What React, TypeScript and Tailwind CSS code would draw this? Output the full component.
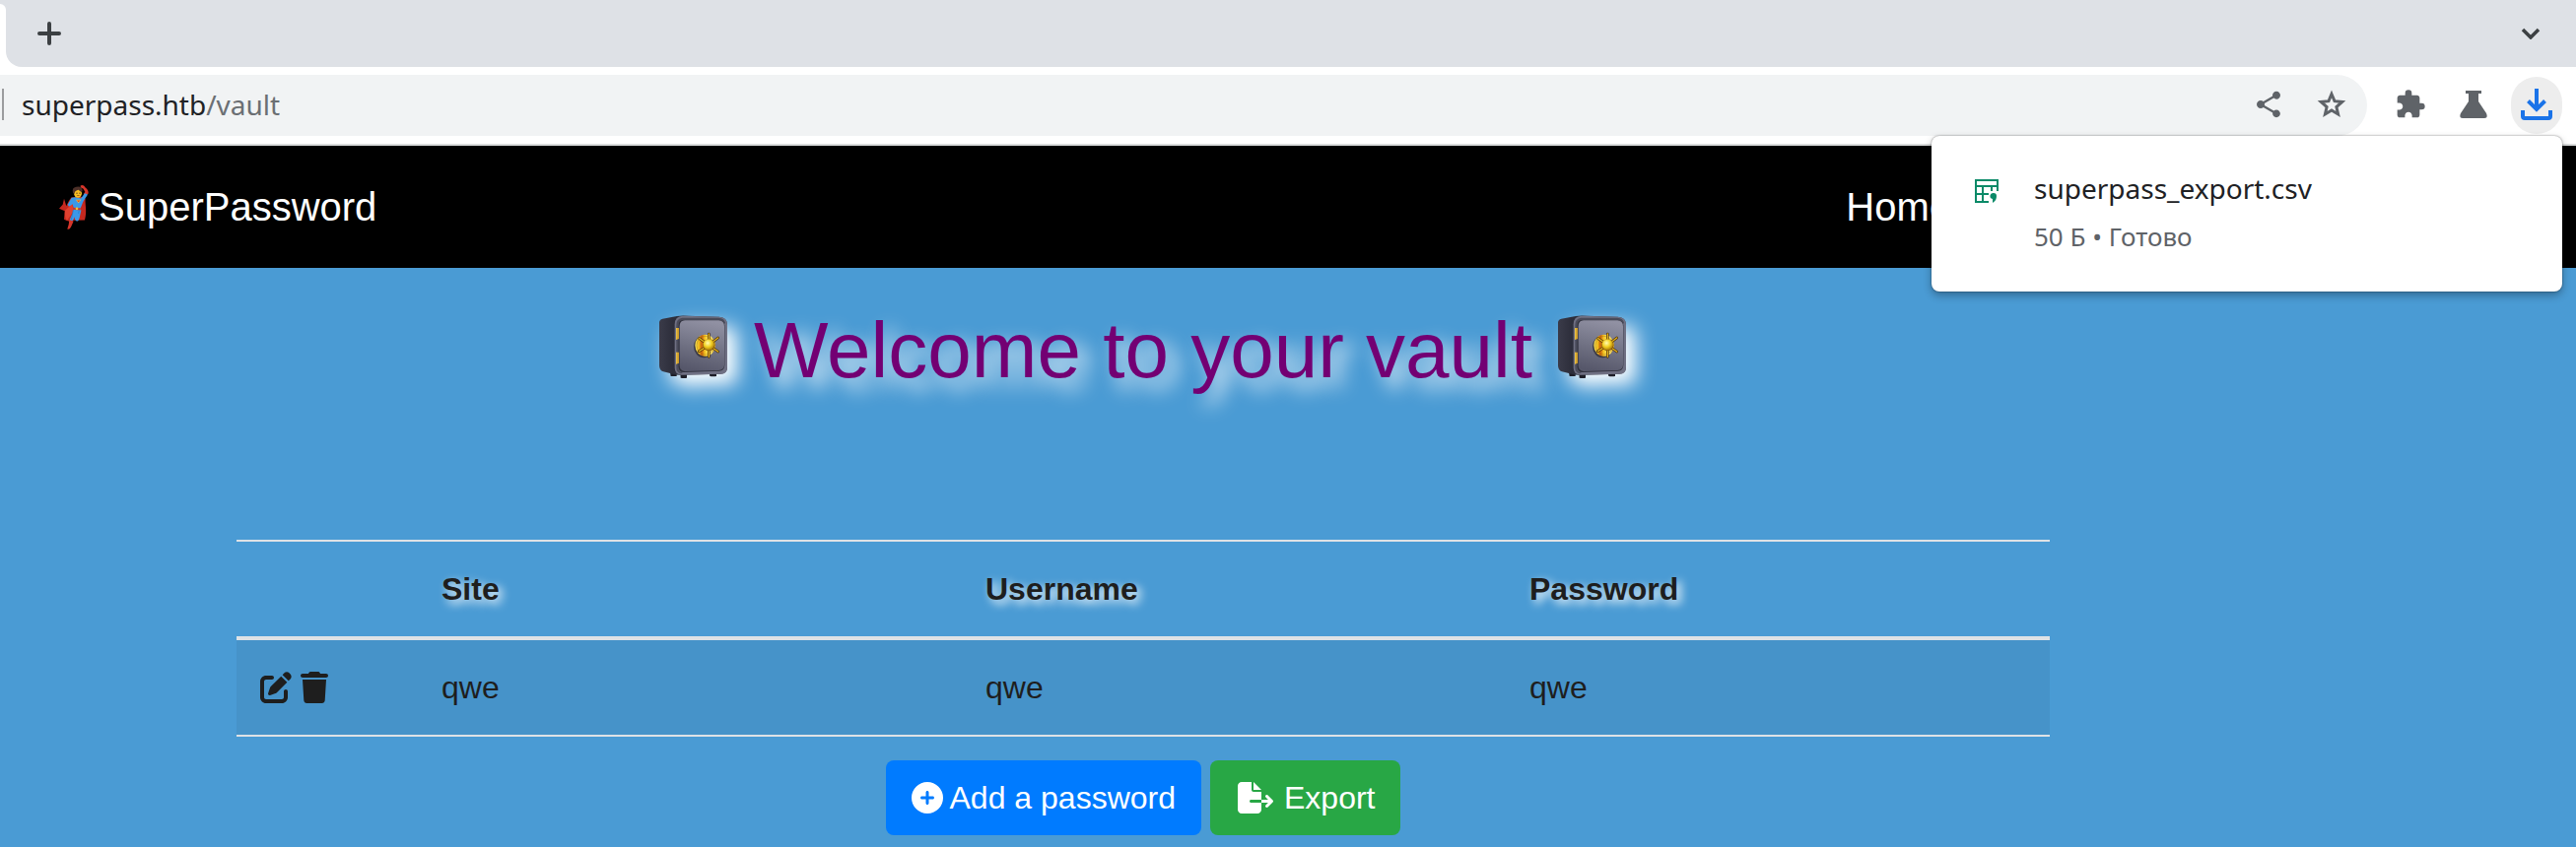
import { FaCirclePlus, FaFileExport, FaPenToSquare, FaTrash } from "react-icons/fa6";
import { MdExtension, MdShare } from "react-icons/md";

interface Entry {
  id: number;
  site: string;
  username: string;
  password: string;
}

const ENTRIES: Entry[] = [{ id: 1, site: "qwe", username: "qwe", password: "qwe" }];

function Hero() {
  return (
    <svg viewBox="60 48 93 140" className="h-[47px] w-[31px]" aria-hidden="true">
      <path d="M97 88 C88 100 84 110 82 114 L75 92 L71 110 L60 122 L77 129 L75 155 Q88 164 104 158 L138 157 C146 130 138 108 140 92 L128 86 Z" fill="#c5281f" />
      <path d="M78 128 Q90 120 99 104 L104 130 L84 158 Q76 148 78 128 Z" fill="#e0402f" />
      <path d="M125 52 Q134 48 140 58 Q150 66 149 76 L138 84 L134 78 L139 71 L133 61 Q124 59 125 52 Z" fill="#d6352a" />
      <path d="M98 89 Q110 84 126 91 L138 75 L147 79 L133 101 Q129 112 125 121 L127 128 L122 150 Q119 161 112 158 L112 140 L104 155 L98 162 L92 156 L101 136 L104 120 L101 108 L90 116 L86 110 Z" fill="#3b98e8" />
      <path d="M103 126 L97 156 M121 128 L115 153" stroke="#2376c4" strokeWidth="2" fill="none" />
      <path d="M91 156 L104 160 L96 178 Q91 187 85 184 Q90 172 91 156 Z" fill="#d6352a" />
      <path d="M108 137 L122 137 L119 158 Q113 164 108 155 Z" fill="#3b98e8" />
      <path d="M102 119 L126 120 L125 127 L102 125 Z" fill="#c9382b" />
      <circle cx="114" cy="122" r="4" fill="#f9c22e" />
      <path d="M111 95 L127 95 L119 105 Z" fill="#f9c22e" />
      <path d="M114 97 L124 97 L119 102 Z" fill="#d6352a" />
      <ellipse cx="117" cy="75" rx="12" ry="14" fill="#f8bd22" />
      <path d="M102 74 Q98 58 112 56 Q128 52 131 66 L129 72 Q122 69 119 65 Q112 66 108 71 L106 78 Z" fill="#4d3028" />
      <circle cx="114" cy="75" r="2" fill="#4d3028" />
      <circle cx="123" cy="75" r="2" fill="#4d3028" />
      <path d="M113 81 Q118 86 123 81 Z" fill="#8a4a18" />
    </svg>
  );
}

function Safe() {
  return (
    <svg
      viewBox="24 30 210 192"
      className="mt-3 h-16 w-[70px] shrink-0 overflow-visible drop-shadow-[10px_10px_10px_white]"
      aria-hidden="true"
    >
      <defs>
        <linearGradient id="safe-side" x1="0" y1="0" x2="1" y2="0">
          <stop offset="0" stopColor="#3a3b49" />
          <stop offset="0.2" stopColor="#2d2e3b" />
          <stop offset="1" stopColor="#393a49" />
        </linearGradient>
        <linearGradient id="safe-door" x1="0.6" y1="0" x2="0.4" y2="1">
          <stop offset="0" stopColor="#9191a3" />
          <stop offset="0.5" stopColor="#737486" />
          <stop offset="1" stopColor="#56576a" />
        </linearGradient>
        <linearGradient id="safe-gold" x1="0" y1="0" x2="1" y2="0">
          <stop offset="0" stopColor="#f6e25a" />
          <stop offset="0.2" stopColor="#f0b818" />
          <stop offset="0.32" stopColor="#c65c0c" />
          <stop offset="0.48" stopColor="#f5c522" />
          <stop offset="0.75" stopColor="#fff07a" />
          <stop offset="1" stopColor="#d09a18" />
        </linearGradient>
        <radialGradient id="safe-knob" cx="0.4" cy="0.35" r="0.7">
          <stop offset="0" stopColor="#fffbb0" />
          <stop offset="0.5" stopColor="#f1cf22" />
          <stop offset="1" stopColor="#9c6a08" />
        </radialGradient>
      </defs>
      <path d="M57 205 h20 v11 h-18 Z M88 208 h20 v13 q-10 2 -19 0 Z M176 205 h22 v11 q-10 2 -20 0 Z" fill="#1d1e28" />
      <path d="M24 52 Q24 44 34 41 L78 33 Q92 30 112 32 L206 35 Q231 37 231 58 V188 Q231 208 211 209 L86 212 Q74 212 66 209 L36 202 Q24 198 24 184 Z" fill="url(#safe-side)" />
      <path d="M71 58 Q71 33 96 32 L206 35 Q231 37 231 58 V188 Q231 208 211 209 L92 212 Q71 211 71 190 Z" fill="#6f7083" />
      <path d="M76 60 Q76 40 94 38 H204 Q223 39 225 54 L222 57 Q218 44 203 44 H98 Q82 46 82 62 V188 Q82 203 96 204 L90 208 Q76 205 76 190 Z" fill="#4a4b5a" />
      <path d="M82 62 Q82 44 98 44 H205 Q223 45 223 62 V182 Q223 199 206 200 L98 204 Q83 203 82 188 Z" fill="#2f303c" />
      <path d="M86 64 Q86 46 102 46 H205 Q222 47 222 64 V181 Q222 197 205 198 L102 201 Q87 200 86 184 Z" fill="url(#safe-door)" />
      <path d="M75 69 h9 v33 l-9 3 Z M75 143 h9 v33 l-9 3 Z" fill="#c9992a" />
      <path d="M75 69 h4 v34 l-4 2 Z M75 143 h4 v34 l-4 2 Z" fill="#e8bf46" />
      <ellipse cx="160" cy="126" rx="31" ry="34" fill="#1f1c22" opacity="0.6" />
      <ellipse cx="164" cy="122" rx="31" ry="33" fill="url(#safe-gold)" />
      <ellipse cx="164" cy="122" rx="26" ry="28" fill="none" stroke="#8d5a0a" strokeWidth="1" />
      <path
        d="M175 121 V87 M175 121 L203 99 M175 121 L203 141 M175 121 V157 M175 121 L145 140 M175 121 L146 101"
        stroke="#4a2e08"
        strokeWidth="8"
        strokeLinecap="round"
      />
      <path
        d="M175 121 V87 M175 121 L203 99 M175 121 L203 141 M175 121 V157 M175 121 L145 140 M175 121 L146 101"
        stroke="#e0b01e"
        strokeWidth="4"
        strokeLinecap="round"
      />
      <circle cx="175" cy="121" r="18" fill="#7a4e08" />
      <circle cx="175" cy="120" r="17" fill="url(#safe-knob)" />
    </svg>
  );
}

function CsvIcon() {
  return (
    <svg viewBox="0 0 24 24" className="mt-3.5 size-6 shrink-0" fill="none" stroke="#0b8a68" strokeWidth="2" aria-hidden="true">
      <path d="M14 23 H1 V1 H23 V12 M1 7 H23 M8 7 V23 M1 15 H14 M17 7 V12" />
      <path d="M19 14 a3 3 0 0 1 3 3 c0 3 -1 5 -4 7 v-4 a3 3 0 0 1 1 -6 Z" fill="#0b8a68" stroke="none" />
    </svg>
  );
}

function BrowserChrome() {
  return (
    <header className="relative border-b-2 border-[#dadcdc] bg-white font-['Noto_Sans',sans-serif]">
      {/* Tab strip */}
      <div className="flex h-[68px]">
        <div className="w-1.5 bg-[#dee1e6] pt-1">
          <div className="h-full rounded-tr-md bg-white" />
        </div>
        <div className="flex flex-1 items-center justify-between rounded-bl-2xl bg-[#dee1e6] pr-9 pl-8">
          <button aria-label="New tab">
            <svg viewBox="0 0 24 24" className="size-6" stroke="#3c4043" strokeWidth="4" strokeLinecap="round">
              <path d="M12 2 V22 M2 12 H22" />
            </svg>
          </button>
          <button aria-label="Search tabs">
            <svg viewBox="0 0 20 12" className="h-3 w-5" fill="none" stroke="#3c4043" strokeWidth="3.500">
              <path d="M2 2 L10 10 L18 2" />
            </svg>
          </button>
        </div>
      </div>

      {/* Toolbar */}
      <div className="flex h-[78px] items-center pr-3.5">
        <div className="flex h-[62px] flex-1 items-center rounded-r-full bg-[#f1f3f4] pr-[18px] pb-0.5 pl-0.5 text-[#5f6368]">
          <div className="h-8 w-0.5 bg-[#9b9c9e]" />
          <div role="textbox" aria-label="Address" className="ml-[18px] flex-1 text-[28px] leading-9 text-[#6b6f73]">
            <span className="text-[#202124]">superpass.htb</span>/vault
          </div>
          <button aria-label="Share" className="mr-[30px]">
            <MdShare className="size-8" />
          </button>
          <button aria-label="Bookmark this page">
            <svg viewBox="0 0 36 36" className="size-9" fill="none" stroke="currentColor" strokeWidth="3">
              <path d="M18 7.500 L21 14.700 L28.700 15.400 L22.900 20.500 L24.600 28 L18 24 L11.400 28 L13.100 20.500 L7.300 15.400 L15 14.700 Z" />
            </svg>
          </button>
        </div>
        <button aria-label="Extensions" className="ml-7 pb-0.5 text-[#5f6368]">
          <MdExtension className="size-8" />
        </button>
        <button aria-label="Experiments" className="ml-[34px] pb-0.5">
          <svg viewBox="0 0 28 28" className="size-7" fill="#5f6368">
            <path d="M6 0 H22 V3 H19 V11 L27 23 Q29 28 25 28 H3 Q-1 28 1 23 L9 11 V3 H6 Z" />
          </svg>
        </button>
        <button aria-label="Downloads" className="ml-6 flex h-[58px] w-[52px] items-center justify-center rounded-full bg-[#ededed] pb-0.5">
          <svg viewBox="0 0 32 32" className="size-8" fill="none" stroke="#1a73e8" strokeWidth="4">
            <path d="M16 0 V21 M7.500 12.500 L16 21 L24.500 12.500" />
            <path d="M2 22 V28 Q2 30 4 30 H28 Q30 30 30 28 V22" />
          </svg>
        </button>
      </div>

      {/* Downloads bubble, hangs over the page */}
      <section
        aria-label="Downloads"
        className="absolute top-[138px] right-3.5 z-10 flex h-[158px] w-[640px] gap-9 rounded-lg bg-white pt-[30px] pl-11 shadow-[0_0_2px_rgba(0,0,0,0.5),0_4px_8px_rgba(0,0,0,0.3)]"
      >
        <CsvIcon />
        <div>
          <p className="text-[28px] leading-[46px] text-[#202124]">superpass_export.csv</p>
          <p className="text-[26px] leading-[52px] text-[#5f6368]">50 Б • Готово</p>
        </div>
      </section>
    </header>
  );
}

export default function App() {
  return (
    <div className="flex min-h-screen flex-col overflow-x-hidden bg-[#4a9bd4] font-['Liberation_Sans',Arial,sans-serif] text-[32px] leading-[48px] text-[#1e1e1e]">
      <BrowserChrome />

      <nav className="flex h-[124px] items-center justify-between bg-black pr-[634px] pl-[60px] text-[40px] leading-[60px] text-white">
        <a href="/" className="flex items-center gap-[9px]">
          <Hero />
          SuperPassword
        </a>
        <a href="/">Home</a>
      </nav>

      <main className="flex-1 pt-9 pr-[294px]">
        <div className="mx-auto max-w-[1840px]">
          <h1 className="flex justify-center gap-[26px] text-[80px] leading-[96px] text-[#730073] [text-shadow:10px_10px_20px_white]">
            <Safe />
            Welcome to your vault
            <Safe />
          </h1>

          <table className="mt-36 w-full table-fixed border-separate border-spacing-0 border-b-2 border-[#dee2e6] text-left">
            <thead>
              <tr className="[text-shadow:4px_4px_10px_white]">
                <th className="w-[10%] border-t-2 border-b-4 border-[#dee2e6] p-6" aria-label="Actions" />
                <th className="w-[30%] border-t-2 border-b-4 border-[#dee2e6] p-6">Site</th>
                <th className="w-[30%] border-t-2 border-b-4 border-[#dee2e6] p-6">Username</th>
                <th className="w-[30%] border-t-2 border-b-4 border-[#dee2e6] p-6">Password</th>
              </tr>
            </thead>
            <tbody>
              {ENTRIES.map((entry) => (
                <tr key={entry.id} className="bg-black/5">
                  <td className="p-6">
                    <div className="flex h-12 items-center gap-[9px]">
                      <button aria-label="Edit">
                        <FaPenToSquare className="size-8" />
                      </button>
                      <button aria-label="Delete">
                        <FaTrash className="h-8 w-7" />
                      </button>
                    </div>
                  </td>
                  <td className="p-6">{entry.site}</td>
                  <td className="p-6">{entry.username}</td>
                  <td className="p-6">{entry.password}</td>
                </tr>
              ))}
            </tbody>
          </table>

          <div className="flex justify-center gap-[9px] pt-6 pb-3 text-white">
            <button className="flex h-[76px] items-center gap-[7px] rounded-lg bg-[#007bff] px-[26px]">
              <FaCirclePlus className="size-8" />
              Add a password
            </button>
            <button className="flex h-[76px] items-center gap-[9px] rounded-lg bg-[#28a745] px-[26px]">
              <FaFileExport className="h-8 w-10" />
              Export
            </button>
          </div>
        </div>
      </main>
    </div>
  );
}
